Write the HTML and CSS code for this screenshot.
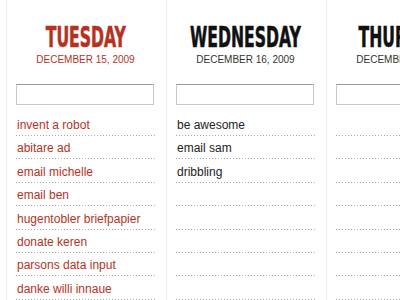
FILE: index.html
```html
<!DOCTYPE html>
<html lang="en">
<head>
  <meta charset="UTF-8" />
  <title>Todo Days</title>
  <link rel="stylesheet" href="styles.css">
</head>
<body>
  <div class="days">
    <section class="day today">
      <h2 class="day-name"><span>TUESDAY</span></h2>
      <div class="day-date">DECEMBER 15, 2009</div>
      <input type="text" class="new-task" />
      <ul class="tasks">
        <li>invent a robot</li>
        <li>abitare ad</li>
        <li>email michelle</li>
        <li>email ben</li>
        <li>hugentobler briefpapier</li>
        <li>donate keren</li>
        <li>parsons data input</li>
        <li>danke willi innaue</li>
      </ul>
    </section>

    <section class="day">
      <h2 class="day-name"><span>WEDNESDAY</span></h2>
      <div class="day-date">DECEMBER 16, 2009</div>
      <input type="text" class="new-task" />
      <ul class="tasks">
        <li>be awesome</li>
        <li>email sam</li>
        <li>dribbling</li>
        <li></li>
        <li></li>
        <li></li>
        <li></li>
        <li></li>
      </ul>
    </section>

    <section class="day">
      <h2 class="day-name"><span>THURSDAY</span></h2>
      <div class="day-date">DECEMBER 17, 2009</div>
      <input type="text" class="new-task" />
      <ul class="tasks">
        <li></li>
        <li></li>
        <li></li>
        <li></li>
        <li></li>
        <li></li>
        <li></li>
        <li></li>
      </ul>
    </section>
  </div>
</body>
</html>
```

FILE: styles.css
```css
body {
  margin: 0;
  background: #fff;
  font-family: "Liberation Sans", Arial, sans-serif;
  overflow: hidden;
}

.days {
  display: flex;
  padding-left: 6px;
  height: 300px;
}

.day {
  flex: 0 0 160px;
  min-width: 0;
  box-sizing: border-box;
  border-left: 1px solid #eeeeee;
  padding: 22px 11px 0 9px;
  color: #222;
}

.day-name {
  display: flex;
  justify-content: center;
  margin: 0;
  font-family: "DejaVu Sans", sans-serif;
  font-stretch: condensed;
  font-weight: bold;
  font-size: 29px;
  line-height: 30px;
  color: #111;
}

.day-name span {
  display: inline-block;
  white-space: nowrap;
  transform: scaleX(0.6);
  -webkit-text-stroke: 0.6px currentColor;
}

.day-date {
  margin-top: 1.5px;
  text-align: center;
  font-size: 10px;
  line-height: 12px;
  color: #333;
}

.today .day-name,
.today .day-date,
.today .tasks {
  color: #b5321f;
}

.new-task {
  display: block;
  box-sizing: border-box;
  width: 138px;
  height: 21px;
  margin: 18.5px 0 0 0;
  padding: 0 4px;
  border: 1px solid #c9c9c9;
  border-top-color: #9a9a9a;
  border-radius: 0;
  background: #fff;
}

.tasks {
  list-style: none;
  margin: 7.6px 0 0 0;
  padding: 0;
  font-size: 12px;
}

.tasks li {
  height: 23.4px;
  box-sizing: border-box;
  padding: 2.5px 0 0 1px;
  line-height: 20px;
  background: linear-gradient(to right, #a9a9a9 1px, transparent 1px) left bottom / 3px 1px repeat-x;
  white-space: nowrap;
}
```
